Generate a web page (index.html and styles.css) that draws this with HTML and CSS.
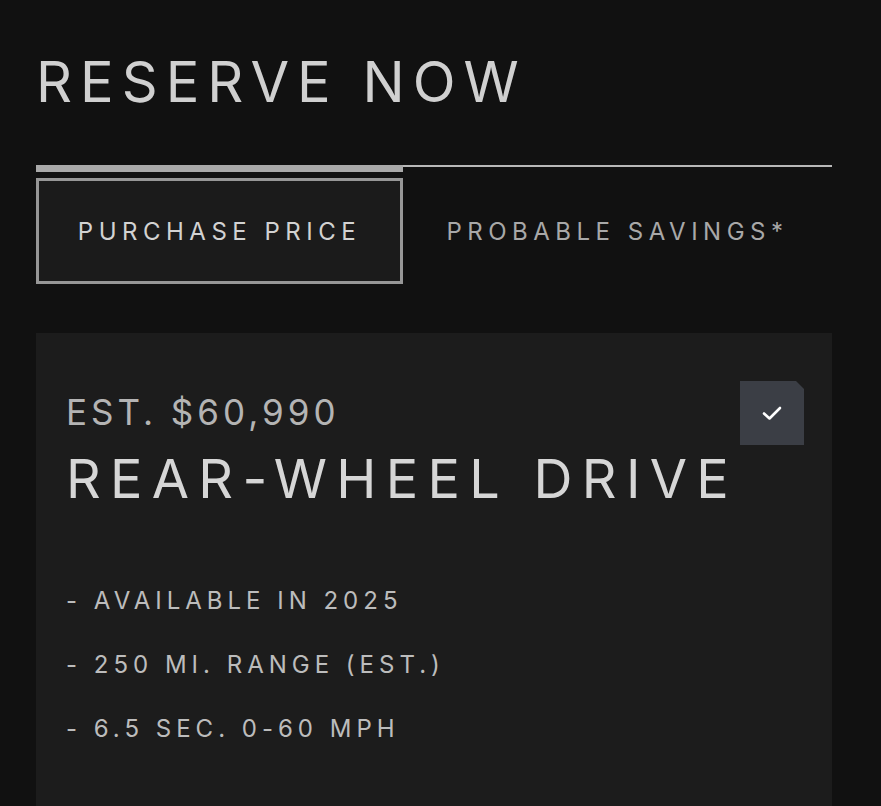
FILE: index.html
```html
<!DOCTYPE html>
<html lang="en">
<head>
    <meta charset="UTF-8">
    <meta name="viewport" content="width=device-width, initial-scale=1.0">
    <title>Reserve Now</title>
    <link rel="stylesheet" href="styles.css">
</head>
<body>

<div class="page">
    <h1 class="title">RESERVE NOW</h1>

    <div class="tabs">
        <div class="tab-wrap active">
            <div class="tab">PURCHASE PRICE</div>
        </div>
        <div class="tab-wrap">
            <div class="tab">PROBABLE SAVINGS*</div>
        </div>
    </div>

    <div class="card">
        <div class="card-head">
            <div>
                <div class="price">EST. $60,990</div>
                <div class="model">REAR-WHEEL DRIVE</div>
            </div>
            <div class="check">
                <svg width="22" height="16" viewBox="0 0 22 16">
                    <path d="M3 8.5 L8.5 13.5 L19 3" fill="none" stroke="#fff" stroke-width="2.6" stroke-linecap="round" stroke-linejoin="round"/>
                </svg>
            </div>
        </div>

        <ul class="specs">
            <li>- AVAILABLE IN 2025</li>
            <li>- 250 MI. RANGE (EST.)</li>
            <li>- 6.5 SEC. 0-60 MPH</li>
        </ul>
    </div>
</div>

</body>
</html>
```

FILE: styles.css
```css
body {
    margin: 0;
    background-color: #111111;
    font-family: Inter, "Noto Sans", sans-serif;
    color: #cfcfcf;
}

.page {
    padding: 0 49px 0 36px;
}

.title {
    margin: 0;
    padding: 52px 0 0 0;
    font-size: 56px;
    font-weight: 400;
    line-height: 60px;
    letter-spacing: 8px;
    color: #d0d0d0;
}

.tabs {
    display: flex;
    margin-top: 53px;
    border-top: 2px solid #b8b8b8;
}

.tab-wrap {
    flex: 1;
    padding-top: 14px;
}

.tab-wrap.active {
    flex: 0 0 367px;
    margin-top: -2px;
    padding-top: 6px;
    border-top: 7px solid #a9a9a9;
}

.tab {
    height: 100px;
    display: flex;
    align-items: center;
    justify-content: center;
    font-size: 24px;
    letter-spacing: 5.5px;
    color: #a8a8a8;
}

.active .tab {
    border: 3px solid #979797;
    background-color: #1b1b1b;
    color: #d2d2d2;
}

.card {
    margin-top: 49px;
    padding: 48px 28px 40px 30px;
    background-color: #1c1c1c;
    min-height: 500px;
}

.card-head {
    display: flex;
    justify-content: space-between;
    align-items: flex-start;
}

.price {
    margin-top: 10px;
    font-size: 35px;
    letter-spacing: 4px;
    color: #b4b4b4;
}

.model {
    margin-top: 13px;
    font-size: 54px;
    letter-spacing: 9.3px;
    color: #d6d6d6;
}

.check {
    width: 64px;
    height: 64px;
    background-color: #3b3e45;
    display: flex;
    align-items: center;
    justify-content: center;
    clip-path: polygon(0 0, 56px 0, 64px 8px, 64px 64px, 0 64px);
}

.specs {
    list-style: none;
    margin: 58px 0 0;
    padding: 0;
}

.specs li {
    font-size: 24px;
    line-height: 64px;
    letter-spacing: 5px;
    color: #bcbcbc;
}
```
